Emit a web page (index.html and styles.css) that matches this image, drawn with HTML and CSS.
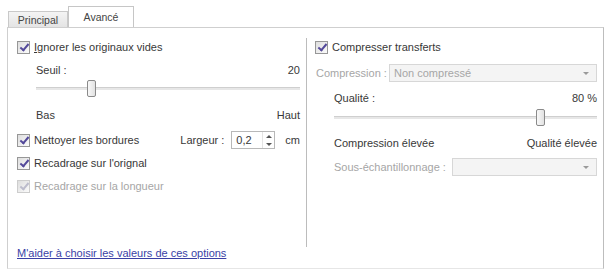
FILE: index.html
```html
<!DOCTYPE html>
<html lang="fr">
<head>
<meta charset="utf-8">
<link rel="stylesheet" href="styles.css">
</head>
<body>
<div class="dialog">
  <div class="tabs">
    <div class="tab">Principal</div>
    <div class="tab active">Avancé</div>
  </div>
  <div class="panel">
    <div class="cols">
      <div class="col left">
        <div class="row r1"><span class="cb checked"></span><span><u>I</u>gnorer les originaux vides</span></div>
        <div class="row ind seuil"><span>Seuil :</span><span class="grow"></span><span>20</span></div>
        <div class="slider ind"><div class="track"></div><div class="thumb" style="left: 51px"></div></div>
        <div class="row ind bas"><span>Bas</span><span class="grow"></span><span>Haut</span></div>
        <div class="row net"><span class="cb checked"></span><span>Nettoyer les bordures</span><span class="grow"></span><span class="lbl">Largeur :</span><span class="spin"><span class="val">0,2</span><span class="btns"><span class="up"></span><span class="down"></span></span></span><span class="unit">cm</span></div>
        <div class="row rec"><span class="cb checked"></span><span>Recadrage sur l'orignal</span></div>
        <div class="row rec disabled"><span class="cb checked dis"></span><span>Recadrage sur la longueur</span></div>
      </div>
      <div class="col right">
        <div class="row r1"><span class="cb checked"></span><span>Compresser transferts</span></div>
        <div class="row comp disabled"><span class="clabel">Compression :</span><span class="select"><span>Non compressé</span><span class="arrow"></span></span></div>
        <div class="row ind qual"><span>Qualité :</span><span class="grow"></span><span>80 %</span></div>
        <div class="slider ind s2"><div class="track"></div><div class="thumb" style="left: 202px"></div></div>
        <div class="row ind cel"><span>Compression élevée</span><span class="grow"></span><span>Qualité élevée</span></div>
        <div class="row ind sous disabled"><span class="slabel">Sous-échantillonnage :</span><span class="select"><span></span><span class="arrow"></span></span></div>
      </div>
    </div>
    <a class="help" href="#">M'aider à choisir les valeurs de ces options</a>
  </div>
</div>
</body>
</html>
```
FILE: styles.css
```css
html, body { margin: 0; padding: 0; background: #fff; }
body { font-family: "Liberation Sans", Arial, sans-serif; font-size: 11px; color: #383838; }
.dialog { width: 609px; height: 273px; }
.tabs { display: flex; align-items: flex-end; height: 27px; padding-left: 8px; }
.tab { box-sizing: border-box; height: 16px; padding: 0 6px; width: 60px; border: 1px solid #c9c9c9; border-bottom: none; background: linear-gradient(#f4f4f4, #e4e4e4); display: flex; align-items: center; justify-content: center; font-size: 10.5px; color: #444; }
.tab.active { height: 22px; width: 66px; background: #fff; position: relative; top: 1px; border-color: #c6c6c6; padding-bottom: 2px; }
.panel { box-sizing: border-box; margin-left: 7px; width: 597px; height: 242px; border: 1px solid #cfcfcf; border-right-color: #bdbdbd; border-bottom-color: #e6e6e6; position: relative; display: flex; flex-direction: column; }
.cols { display: flex; margin-top: 10px; height: 209px; }
.col { box-sizing: border-box; display: flex; flex-direction: column; }
.col.left { width: 298px; padding: 0 6px 0 9px; }
.col.right { flex: 1; border-left: 1px solid #bcbcbc; padding: 0 6px 0 8px; }
.row { display: flex; align-items: center; height: 18px; white-space: nowrap; }
.grow { flex: 1; }
.ind { margin-left: 19px; }
.cb { box-sizing: border-box; width: 13px; height: 13px; border: 1px solid #979797; background: linear-gradient(135deg, #dedede, #fbfbfb); margin-right: 4px; position: relative; flex: none; }
.cb.checked::after { content: ""; position: absolute; left: 4px; top: 0px; width: 3px; height: 7px; border: solid #53499a; border-width: 0 2px 2px 0; transform: rotate(40deg); }
.cb.dis { border-color: #cdcdcd; }
.cb.dis::after { border-color: #bcbccc; }
.disabled { color: #a6a6a6; }
.seuil { margin-top: 5px; }
.slider { position: relative; height: 18px; }
.track { position: absolute; left: 0; right: 0; top: 8px; height: 2px; background: #e7e7e7; border-top: 1px solid #cfcfcf; }
.thumb { position: absolute; top: 1px; width: 9px; height: 17px; box-sizing: border-box; border: 1px solid #8a8a8a; border-radius: 2px; background: linear-gradient(90deg, #f8f8f8, #e2e2e2); }
.bas { margin-top: 9px; }
.net { margin-top: 7px; }
.lbl { margin-right: 7px; }
.spin { box-sizing: border-box; width: 44px; height: 18px; border: 1px solid #b8b8b8; display: flex; align-items: center; }
.val { flex: 1; padding-left: 4px; }
.btns { width: 11px; height: 16px; display: flex; flex-direction: column; align-items: center; justify-content: space-around; border-left: 1px solid #e4e4e4; }
.up { width: 0; height: 0; border-left: 3px solid transparent; border-right: 3px solid transparent; border-bottom: 3px solid #555; }
.down { width: 0; height: 0; border-left: 3px solid transparent; border-right: 3px solid transparent; border-top: 3px solid #555; }
.unit { margin-left: 10px; }
.rec { margin-top: 5px; }
.comp { margin-top: 8px; }
.clabel { margin-left: 1px; width: 73px; }
.select { flex: 1; box-sizing: border-box; height: 18px; border: 1px solid #d7d7d7; background: #f4f4f4; display: flex; align-items: center; padding: 0 7px 0 4px; }
.select span:first-child { flex: 1; }
.arrow { width: 0; height: 0; border-left: 3px solid transparent; border-right: 3px solid transparent; border-top: 3px solid #9a9a9a; }
.qual { margin-top: 7px; }
.s2 { margin-top: 1px; }
.cel { margin-top: 8px; }
.sous { margin-top: 6px; }
.slabel { width: 118px; }
.help { position: absolute; left: 9px; top: 219px; color: #3a3fa6; text-decoration: underline; }
```
